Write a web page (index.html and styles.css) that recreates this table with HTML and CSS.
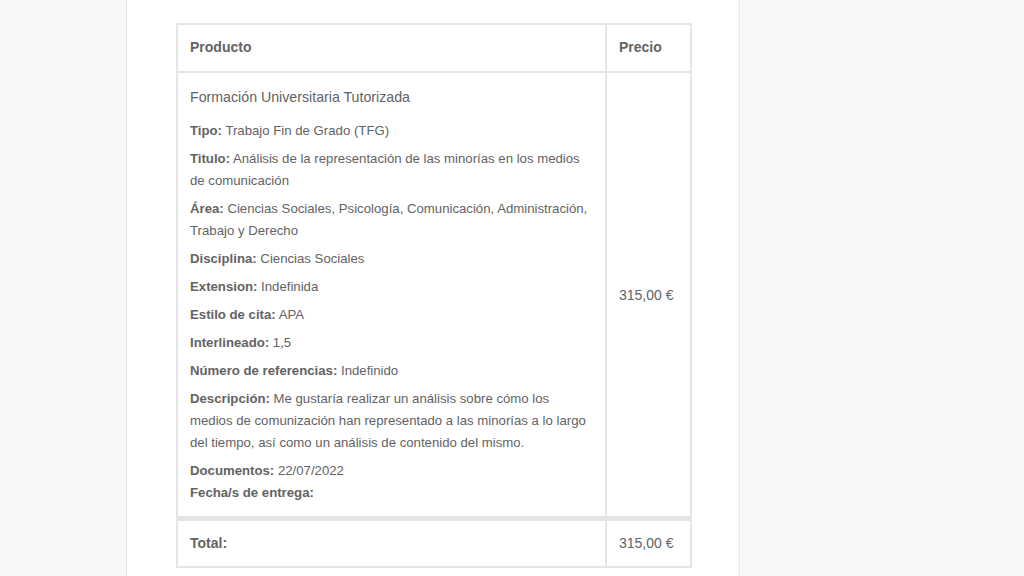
FILE: index.html
```html
<!DOCTYPE html>
<html lang="es">
<head>
<meta charset="utf-8">
<title>Pedido</title>
<link rel="stylesheet" href="styles.css">
</head>
<body>
<div class="wrapper">
  <div class="container">
    <table class="order">
      <colgroup><col class="c-prod"><col class="c-price"></colgroup>
      <thead>
        <tr><th>Producto</th><th>Precio</th></tr>
      </thead>
      <tbody>
        <tr>
          <td class="item">
            <div class="name">Formación Universitaria Tutorizada</div>
            <ul class="meta">
              <li><strong>Tipo:</strong> Trabajo Fin de Grado (TFG)</li>
              <li><strong>Titulo:</strong> Análisis de la representación de las minorías en los medios de comunicación</li>
              <li><strong>Área:</strong> Ciencias Sociales, Psicología, Comunicación, Administración, Trabajo y Derecho</li>
              <li><strong>Disciplina:</strong> Ciencias Sociales</li>
              <li><strong>Extension:</strong> Indefinida</li>
              <li><strong>Estilo de cita:</strong> APA</li>
              <li><strong>Interlineado:</strong> 1,5</li>
              <li><strong>Número de referencias:</strong> Indefinido</li>
              <li><strong>Descripción:</strong> Me gustaría realizar un análisis sobre cómo los medios de comunización han representado a las minorías a lo largo del tiempo, así como un análisis de contenido del mismo.</li>
              <li><strong>Documentos:</strong> 22/07/2022<br><strong>Fecha/s de entrega:</strong></li>
            </ul>
          </td>
          <td class="price">315,00&nbsp;€</td>
        </tr>
      </tbody>
      <tfoot>
        <tr><th>Total:</th><td>315,00&nbsp;€</td></tr>
      </tfoot>
    </table>
  </div>
</div>
</body>
</html>
```
FILE: styles.css
```css
html, body {
  margin: 0;
  padding: 0;
  background: #f7f7f7;
  height: 100%;
  overflow: hidden;
}
body {
  font-family: "Liberation Sans", Arial, sans-serif;
  color: #636363;
}
.wrapper {
  padding-left: 126px;
}
.container {
  width: 614px;
  min-height: 576px;
  box-sizing: border-box;
  background: #fff;
  border-left: 1px solid #e6e6e6;
  border-right: 1px solid #e6e6e6;
  padding: 23px 49px 0 49px;
}
.order {
  width: 514px;
  table-layout: fixed;
  border-collapse: collapse;
  border: 2px solid #e5e5e5;
}
.c-prod { width: 429px; }
.c-price { width: 85px; }
.order th,
.order td {
  border: 2px solid #e5e5e5;
  padding: 12px;
  text-align: left;
  vertical-align: middle;
  font-size: 14px;
  line-height: 21px;
  color: #636363;
}
.order th {
  font-weight: bold;
}
.order thead th {
  padding-top: 12px;
  padding-bottom: 13px;
}
.order tbody td {
  padding-top: 14px;
  padding-bottom: 12px;
}
.order tfoot th,
.order tfoot td {
  border-top-width: 5px;
}
.order td.item {
  vertical-align: top;
}
.name {
  font-size: 14.2px;
  line-height: 21px;
}
.meta {
  list-style: none;
  margin: 12px 0 0 0;
  padding: 0;
  font-size: 13.2px;
  line-height: 22px;
}
.meta li {
  margin: 0 0 6px 0;
}
.meta li:last-child {
  margin-bottom: 0;
}
.meta strong {
  font-weight: bold;
}
```
